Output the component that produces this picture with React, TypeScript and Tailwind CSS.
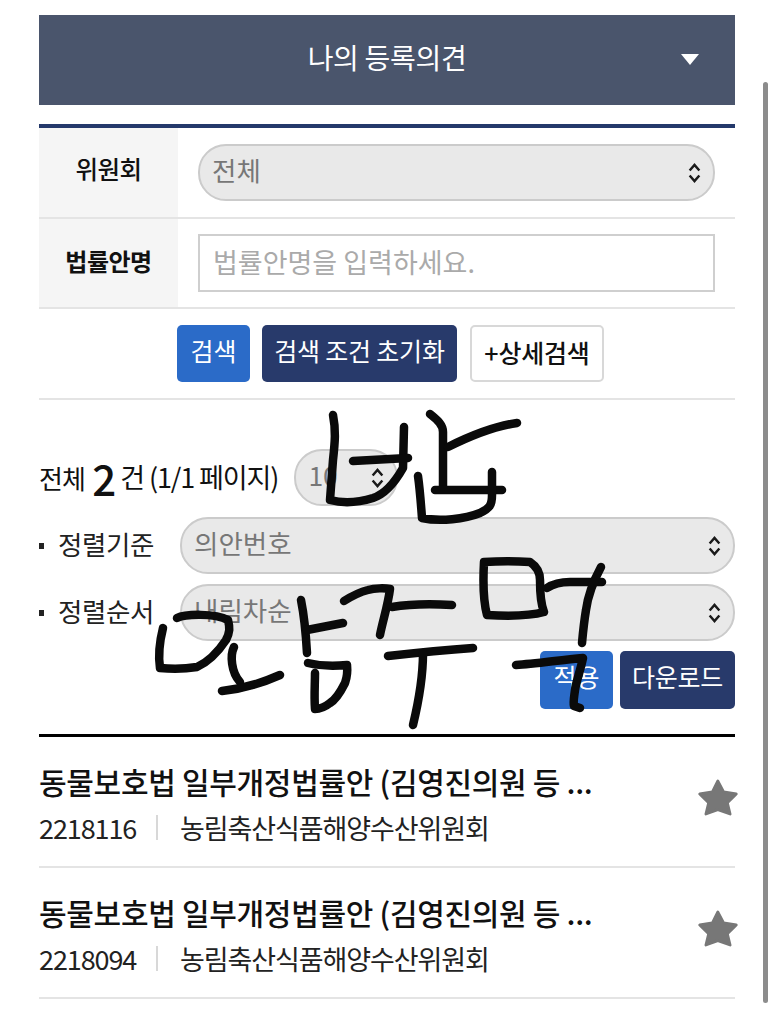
import { useState } from 'react'

// hand-drawn scribble over the page, in page coordinates
const strokes = [
    'M333 415 C336 430 335 442 333 460 L330 500 C345 504 360 502 373 498 C385 494 394 484 403 468 L404 427',
    'M353 461 L408 458',
    'M430 414 C436 419 443 424 443 432 L443 488',
    'M448 447 C470 436 495 426 517 423',
    'M435 490 L502 490',
    'M418 476 C420 490 421 505 422 518 C440 522 465 519 480 513 C490 508 492 505 492 495 L492 472',
    'M177 618 C185 614 215 613 228 620 C230 628 230 632 226 640 C218 652 208 662 197 667 C185 669 170 669 160 668 C158 655 160 640 163 628',
    'M234 647 C230 655 231 672 240 682',
    'M222 691 C240 689 262 683 280 675',
    'M301 600 C304 615 306 635 307 653',
    'M307 630 L343 623',
    'M308 663 C320 666 335 666 347 665 C348 675 346 680 345 683 C340 693 335 700 330 703 C325 707 320 709 315 709 C314 695 315 685 315 673',
    'M344 601 C352 596 360 592 368 590 C375 588 385 588 390 589 C388 605 383 620 380 635',
    'M392 607 C410 604 435 604 452 605',
    'M484 562 C500 561 515 561 530 562 C536 566 540 572 540 580 C540 590 540 602 544 612 C530 616 505 616 487 615 C483 600 483 580 484 562 Z',
    'M547 588 C553 584 560 582 570 582 L602 582',
    'M601 567 C594 580 588 595 586 610 C584 622 583 632 582 643',
    'M388 656 C415 653 445 650 473 648',
    'M423 653 C423 675 419 700 413 725',
    'M516 665 C535 664 560 660 583 658 C580 672 576 682 575 690 C574 698 573 702 574 706 L580 708',
]

function Chevrons() {
    return (
        <svg viewBox="0 0 18 26" className="absolute right-[13px] top-1/2 h-[21px] w-[15px] -translate-y-1/2 pointer-events-none" fill="none" stroke="#1a1a1a" strokeWidth="3">
            <path d="M3 10 L9 3 L15 10" />
            <path d="M3 16 L9 23 L15 16" />
        </svg>
    )
}

function PillSelect({ value, className }: { value: string; className: string }) {
    const [current, setCurrent] = useState(value)
    return (
        <div className={`relative h-[57px] ${className}`}>
            <select
                value={current}
                onChange={(e) => setCurrent(e.target.value)}
                className="h-full w-full appearance-none rounded-[28px] border-2 border-[#cbcbcb] bg-[#e9e9e9] pb-[5px] pl-[12px] text-[26.5px] text-[#777777] outline-none"
            >
                <option>{value}</option>
            </select>
            <Chevrons />
        </div>
    )
}

function BillRow({ num }: { num: string }) {
    return (
        <div className="flex h-[131px] items-center justify-between border-b-2 border-[#e4e4e4]">
            <div className="pt-[4px]">
                <div className="text-[30px] leading-[38px] font-medium tracking-[-0.3px] text-[#111111]">
                    동물보호법 일부개정법률안 (김영진의원 등 ...
                </div>
                <div className="mt-[10px] flex items-center text-[27px] leading-[36px] tracking-[-1.1px] text-[#222222]">
                    <span className="w-[97px]">{num}</span>
                    <span className="ml-[20px] h-[25px] w-[2px] bg-[#d8d8d8]" />
                    <span className="ml-[22px]">농림축산식품해양수산위원회</span>
                </div>
            </div>
            <svg viewBox="-4 -4 123 113" className="-mr-[4px] -mt-[8px] h-[39px] w-[42px] shrink-0 blur-[0.5px]" fill="#777777" stroke="#777777" strokeWidth="8" strokeLinejoin="round">
                <path d="M57 4 L74 36 L111 42 L85 68 L93 101 L57 88 L22 101 L30 68 L4 42 L41 36 Z" />
            </svg>
        </div>
    )
}

export default function App() {
    return (
        <div className="relative h-[1024px] w-[774px] overflow-hidden bg-white font-['Noto_Sans_CJK_KR',sans-serif]">
            <div className="ml-[39px] w-[696px] pt-[15px]">
                {/* Header */}
                <div className="relative flex h-[90px] items-center justify-center bg-[#4a556c] pb-[6px] text-[28px] tracking-[-0.3px] text-white">
                    나의 등록의견
                    <span className="absolute right-[36px] top-[39px] h-0 w-0 border-x-[9px] border-t-[11px] border-x-transparent border-t-white" />
                </div>

                {/* Search table */}
                <div className="mt-[19px] border-t-4 border-[#24396b]">
                    <div className="flex h-[91px] border-b-2 border-[#e4e4e4]">
                        <div className="flex w-[139px] items-center justify-center bg-[#f5f5f5] pb-[6px] text-[24.5px] font-medium tracking-[-0.5px] text-[#111111]">위원회</div>
                        <div className="pl-[20px] pt-[16px]">
                            <PillSelect value="전체" className="w-[517px]" />
                        </div>
                    </div>
                    <div className="flex h-[90px] border-b-2 border-[#e4e4e4]">
                        <div className="flex w-[139px] items-center justify-center bg-[#f5f5f5] pb-[4px] text-[24px] font-bold tracking-[-0.5px] text-[#111111]">법률안명</div>
                        <div className="pl-[20px] pt-[15px]">
                            <input
                                placeholder="법률안명을 입력하세요."
                                className="h-[58px] w-[517px] border-2 border-[#cfcfcf] bg-white pb-[4px] pl-[13px] text-[27px] outline-none placeholder:text-[#aaaaaa]"
                            />
                        </div>
                    </div>
                </div>

                {/* Search buttons */}
                <div className="flex h-[91px] items-center border-b-2 border-[#e4e4e4] pl-[138px]">
                    <button className="h-[57px] w-[73px] rounded-[5px] bg-[#2b6bc8] pb-[6px] text-[25px] text-white">검색</button>
                    <button className="ml-[12px] h-[57px] w-[195px] rounded-[5px] bg-[#283a6b] pb-[6px] text-[25px] tracking-[-0.2px] text-white">검색 조건 초기화</button>
                    <button className="ml-[13px] h-[57px] w-[134px] rounded-[5px] border-2 border-[#d8d8d8] bg-white pb-[2px] text-[25px] font-medium tracking-[-0.2px] text-[#111111]">+상세검색</button>
                </div>

                {/* Result count */}
                <div className="mt-[49px] flex h-[57px] items-center text-[#111111]">
                    <span className="text-[26px] tracking-[-0.8px]">전체</span>
                    <span className="ml-[7px] text-[42px] leading-none font-medium">2</span>
                    <span className="ml-[4px] text-[27px] tracking-[-1.1px]">건 (1/1 페이지)</span>
                    <PillSelect value="10" className="ml-[16px] w-[104px]" />
                </div>

                {/* Sort options */}
                <div className="mt-[11px] flex items-center">
                    <span className="h-[6px] w-[5px] bg-[#222222]" />
                    <span className="ml-[14px] w-[122px] pb-[4px] text-[26.5px] tracking-[-0.4px] text-[#222222]">정렬기준</span>
                    <PillSelect value="의안번호" className="w-[555px]" />
                </div>
                <div className="mt-[10px] flex items-center">
                    <span className="h-[6px] w-[5px] bg-[#222222]" />
                    <span className="ml-[14px] w-[122px] pb-[4px] text-[26.5px] tracking-[-0.4px] text-[#222222]">정렬순서</span>
                    <PillSelect value="내림차순" className="w-[555px]" />
                </div>

                <div className="mt-[10px] flex justify-end gap-[7px]">
                    <button className="h-[58px] w-[73px] rounded-[5px] bg-[#2b6bc8] pb-[6px] text-[25px] text-white">적용</button>
                    <button className="h-[58px] w-[115px] rounded-[5px] bg-[#283a6b] pb-[6px] text-[25px] tracking-[-0.2px] text-white">다운로드</button>
                </div>

                {/* Bill list */}
                <div className="mt-[25px] border-t-[3px] border-black">
                    <BillRow num="2218116" />
                    <BillRow num="2218094" />
                </div>
            </div>

            {/* Scrollbar thumb */}
            <div className="absolute left-[763px] top-[82px] h-[921px] w-[5px] rounded-full bg-[#8c8c8c]" />

            {/* Handwriting over the page */}
            <svg viewBox="0 0 774 1024" className="absolute inset-0 h-[1024px] w-[774px] pointer-events-none" fill="none" stroke="#0a0a0a" strokeWidth="8.5" strokeLinecap="round" strokeLinejoin="round">
                {strokes.map((d, i) => (
                    <path key={i} d={d} />
                ))}
            </svg>
        </div>
    )
}
